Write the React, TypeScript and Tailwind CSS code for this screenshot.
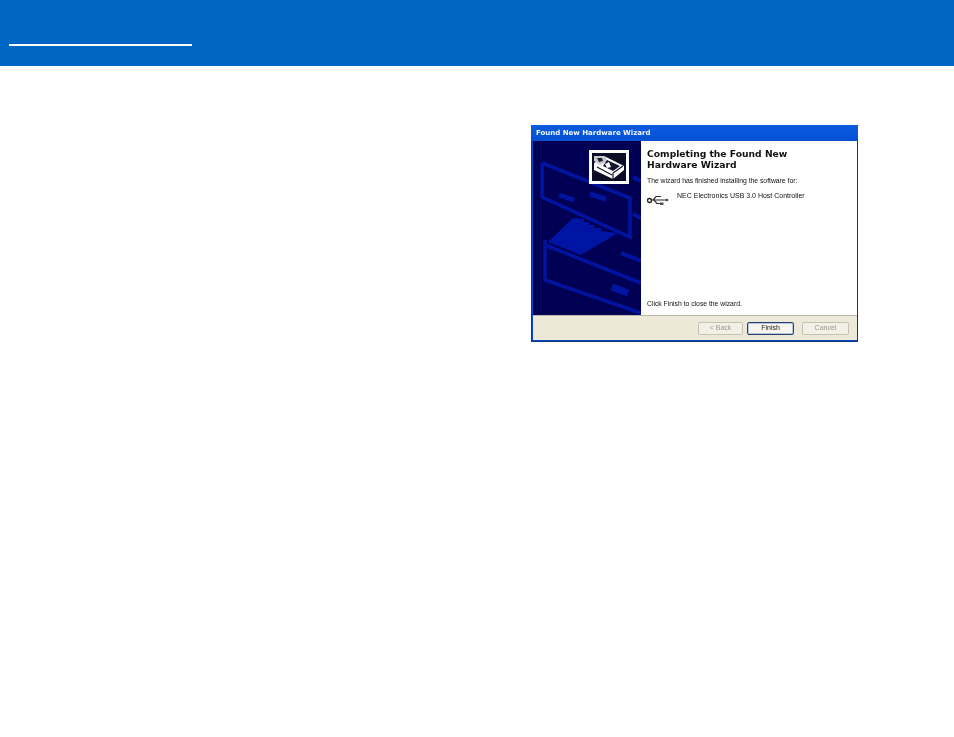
const SidebarArt = () => (
  <svg className="absolute inset-0 h-full w-full" viewBox="0 0 108 174" fill="none">
    <defs>
      <pattern id="grid" width="3" height="3" patternUnits="userSpaceOnUse">
        <rect width="3" height="3" fill="#00005c" />
        <rect width="1" height="3" fill="#00004e" />
        <rect width="3" height="1" fill="#00004e" />
      </pattern>
    </defs>
    <rect width="108" height="174" fill="url(#grid)" />
    {/* upper board outline */}
    <path d="M9 22 L9 56 L97 96 L97 57 L9 22" stroke="#0014a0" strokeWidth="3.5" />
    <path d="M26 54 L41 59 M57 53 L73 58" stroke="#0014a0" strokeWidth="5" />
    <path d="M100 36 L108 40 M100 73 L108 77" stroke="#0014a0" strokeWidth="4" />
    {/* solid part with stepped edge */}
    <path
      d="M15 101 L40 77 L51 78 L51 81 L56 81 L56 84 L61 84 L61 87 L68 87 L68 90 L85 92 L48 114 Z"
      fill="#0014a4"
    />
    {/* lower board outline */}
    <path d="M12 99 L12 139 L108 172 M12 104 L108 142" stroke="#0014a0" strokeWidth="3.5" />
    <path d="M88 112 L108 120" stroke="#0014a4" strokeWidth="4" />
    <path d="M79 146 L95 152" stroke="#0014a4" strokeWidth="7" />
  </svg>
);

const HardwareIcon = () => (
  <div className="absolute left-[56px] top-[9px] flex h-[34px] w-[40px] items-center justify-center bg-white">
    <svg width="34" height="28" viewBox="0 0 34 28">
      <rect width="34" height="28" fill="#0c0c24" />
      <path d="M2 10 L14 4 L32 13 L32 17 L21 26 L2 17 Z" fill="#ffffff" />
      <path d="M2 3 L13 3 L16 8 L8 12 L2 8 Z" fill="#c8c8d0" />
      <path d="M5 5 L10 5 L11 8 L7 9 Z" fill="#20202c" />
      <path d="M15 7 L28 13 L21 18 L11 13 Z" fill="#16162a" />
      <path d="M13 11 L17 9 L19 14 L15 15 Z" fill="#ffffff" />
      <path d="M5 14 L20 22 M21 20 L31 13 M21 20 L21 26" stroke="#16162a" strokeWidth="1.2" />
    </svg>
  </div>
);

const UsbIcon = () => (
  <svg className="mt-[3px] shrink-0" width="22" height="12" viewBox="0 0 22 12" fill="none">
    <circle cx="2.5" cy="6.5" r="2" stroke="#222" strokeWidth="1.4" />
    <path d="M4 6 L20 6" stroke="#444" strokeWidth="1.2" />
    <path d="M6 6 L9 2.5 L14 2.5 M7 6 L10 9.5 L14 9.5" stroke="#333" strokeWidth="1.2" />
    <rect x="13" y="8.5" width="3.5" height="2.5" fill="#555" />
    <path d="M19 4.5 L22 6 L19 7.5 Z" fill="#333" />
  </svg>
);

const WizardButton = ({ label, active, width }: { label: string; active?: boolean; width: string }) => (
  <div
    className={
      active
        ? `flex h-[13px] ${width} items-center justify-center rounded-[2px] border border-[#2b3f6e] bg-[#f6f5ee] text-[7px] text-[#222] shadow-[inset_0_0_0_1px_#b4c6e4]`
        : `flex h-[13px] ${width} items-center justify-center rounded-[2px] border border-[#c4c2b2] bg-[#f2f1e8] text-[7px] text-[#9a998c]`
    }
  >
    {label}
  </div>
);

export default function App() {
  return (
    <div className="min-h-[737px] bg-white font-['Liberation_Sans',sans-serif]">
      <header className="flex h-[66px] items-end bg-[#0066c4] pb-[20px] pl-[9px]">
        <div className="h-[2px] w-[183px] bg-white" />
      </header>

      <div className="ml-[531px] mt-[59px] flex h-[217px] w-[327px] flex-col bg-[#0b48c8] blur-[0.3px] shadow-[inset_0_0_0_1px_#10357e]">
        <div className="flex h-[16px] items-center bg-gradient-to-b from-[#0a5ce0] to-[#0450d2] pl-[5px] font-['DejaVu_Sans',sans-serif] text-[7px] font-bold text-[#f2f6ff]">
          Found New Hardware Wizard
        </div>
        <div className="ml-[2px] mr-[1px] flex flex-col">
          <div className="flex h-[174px]">
            <div className="relative w-[108px] shrink-0 overflow-hidden bg-[#00005c]">
              <SidebarArt />
              <HardwareIcon />
            </div>
            <div className="flex flex-1 flex-col bg-white pl-[6px] text-[#111]">
              <h1 className="mt-[7px] font-['DejaVu_Sans',sans-serif] text-[9.2px] font-bold leading-[11px] text-[#111]">
                Completing the Found New
                <br />
                Hardware Wizard
              </h1>
              <p className="mt-[6px] text-[6.8px] leading-[9px]">The wizard has finished installing the software for:</p>
              <div className="mt-[6px] flex">
                <UsbIcon />
                <span className="ml-[8px] text-[7px] leading-[9px]">NEC Electronics USB 3.0 Host Controller</span>
              </div>
              <p className="mt-auto mb-[7px] text-[6.8px] leading-[9px]">Click Finish to close the wizard.</p>
            </div>
          </div>
          <div className="flex h-[25px] items-center justify-end border-t border-[#b9b7a6] bg-[#ece9d8] pr-[8px]">
            <WizardButton label="< Back" width="w-[45px]" />
            <div className="ml-[4px] mr-[8px]">
              <WizardButton label="Finish" active width="w-[47px]" />
            </div>
            <WizardButton label="Cancel" width="w-[47px]" />
          </div>
        </div>
      </div>
    </div>
  );
}
